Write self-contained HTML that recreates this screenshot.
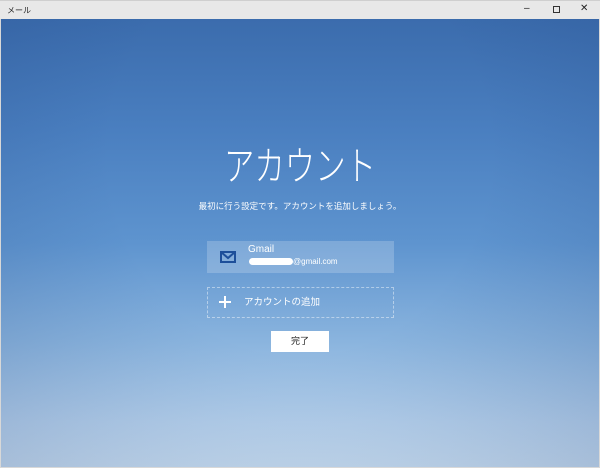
<!DOCTYPE html>
<html><head><meta charset="utf-8"><style>
*{margin:0;padding:0;box-sizing:border-box}
body{width:600px;height:468px;overflow:hidden;background:#d8d8d8;font-family:"Liberation Sans","Noto Sans CJK JP",sans-serif;position:relative}
.tb{position:absolute;left:0;top:0;width:600px;height:19px;background:#e8e8e8;border-top:1px solid #cfcfcf}
.tb span{position:absolute;font-size:8px;color:#222;top:4px}
.c{position:absolute;left:1px;top:19px;width:598px;height:448px;
background:linear-gradient(180deg,#3b6cad 0%,#4a7fc0 25%,#5e94cf 50%,#8ab4de 72%,#b6d1ec 90%,#c8ddf0 100%)}
.v{position:absolute;inset:0;background:radial-gradient(ellipse at 50% 30%,rgba(255,255,255,0) 45%,rgba(20,50,110,.18) 100%)}
.w{color:#fff;position:absolute;left:0;width:598px;text-align:center}
</style></head><body>
<div class="tb"><span style="left:7px">メール</span>
<span style="left:524px;top:2px;font-size:10px">–</span>
<span style="left:553px;top:5px;width:7px;height:7px;border:1px solid #333"></span>
<span style="left:580px;top:2px;font-size:10px">✕</span></div>
<div class="c"><div class="v"></div>
<div class="w" style="top:123px;font-size:40px;font-weight:300;transform:scaleX(0.76);line-height:50px">アカウント</div>
<div class="w" style="top:181px;font-size:8.5px">最初に行う設定です。アカウントを追加しましょう。</div>
<div style="position:absolute;left:206px;top:222px;width:187px;height:32px;background:rgba(255,255,255,.2)">
<svg style="position:absolute;left:13px;top:10px" width="16" height="12" viewBox="0 0 16 12"><rect x="1" y="1" width="14" height="10" fill="none" stroke="#1d4f9a" stroke-width="2"/><path d="M1 1 L8 7 L15 1" fill="none" stroke="#1d4f9a" stroke-width="2"/></svg>
<div style="position:absolute;left:41px;top:3px;color:#fff;font-size:10px">Gmail</div>
<div style="position:absolute;left:42px;top:17px;width:44px;height:7px;border-radius:4px;background:#fff"></div>
<div style="position:absolute;left:86px;top:16px;color:#fff;font-size:8px">@gmail.com</div>
</div>
<div style="position:absolute;left:206px;top:268px;width:187px;height:31px;border:1px dashed rgba(255,255,255,.45)">
<div style="position:absolute;left:11px;top:8px;width:12px;height:2px;background:#fff;margin-top:5px"></div>
<div style="position:absolute;left:16px;top:8px;width:2px;height:12px;background:#fff"></div>
<div style="position:absolute;left:36px;top:6px;color:#fff;font-size:9.5px">アカウントの追加</div>
</div>
<div style="position:absolute;left:270px;top:312px;width:58px;height:21px;background:#fff;color:#222;font-size:9px;text-align:center;line-height:21px">完了</div>
</div>
</body></html>
